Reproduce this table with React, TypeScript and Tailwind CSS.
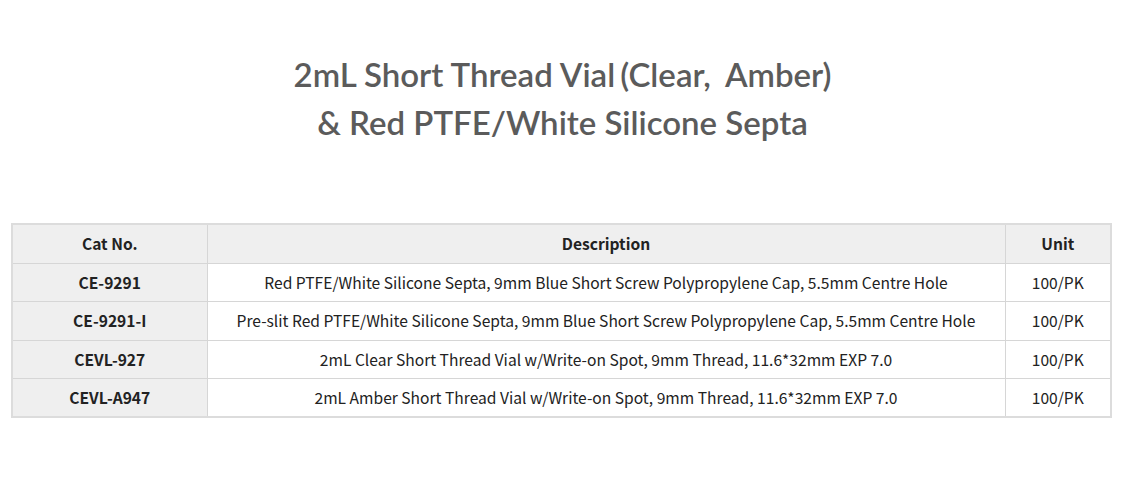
import React from "react";

const rows = [
  ["CE-9291", "Red PTFE/White Silicone Septa, 9mm Blue Short Screw Polypropylene Cap, 5.5mm Centre Hole", "100/PK"],
  ["CE-9291-I", "Pre-slit Red PTFE/White Silicone Septa, 9mm Blue Short Screw Polypropylene Cap, 5.5mm Centre Hole", "100/PK"],
  ["CEVL-927", "2mL Clear Short Thread Vial w/Write-on Spot, 9mm Thread, 11.6*32mm EXP 7.0", "100/PK"],
  ["CEVL-A947", "2mL Amber Short Thread Vial w/Write-on Spot, 9mm Thread, 11.6*32mm EXP 7.0", "100/PK"],
];

export default function App() {
  return (
    <div className="w-[1125px] h-[487px] bg-white overflow-hidden">
      <div
        className="pt-[50px] text-center text-[33px] leading-[48px] text-[#5b5b5b] font-semibold"
        style={{ fontFamily: "Lato, 'Noto Sans', sans-serif" }}
      >
        <div>
          2mL Short Thread Vial<span className="ml-[5px]">(Clear,</span>
          <span className="ml-[14px]">Amber)</span>
        </div>
        <div>&amp; Red PTFE/White Silicone Septa</div>
      </div>
      <div className="pl-[11px] pt-[77px]">
        <table
          className="w-[1101px] border-collapse border-2 border-[#dcdcdc] text-[15.6px] text-[#222]"
          style={{ fontFamily: "'Noto Sans CJK KR', 'Open Sans', sans-serif" }}
        >
          <thead>
            <tr className="h-[39px] bg-[#efefef] font-bold">
              <th className="w-[195px] border border-[#d6d6d6] font-bold">Cat No.</th>
              <th className="border border-[#d6d6d6] font-bold">Description</th>
              <th className="w-[106px] border border-[#d6d6d6] font-bold">Unit</th>
            </tr>
          </thead>
          <tbody>
            {rows.map((r) => (
              <tr key={r[0]} className="h-[38.5px]">
                <td className="border border-[#d6d6d6] bg-[#efefef] text-center font-bold">{r[0]}</td>
                <td className="border border-[#d6d6d6] text-center">{r[1]}</td>
                <td className="border border-[#d6d6d6] text-center">{r[2]}</td>
              </tr>
            ))}
          </tbody>
        </table>
      </div>
    </div>
  );
}
